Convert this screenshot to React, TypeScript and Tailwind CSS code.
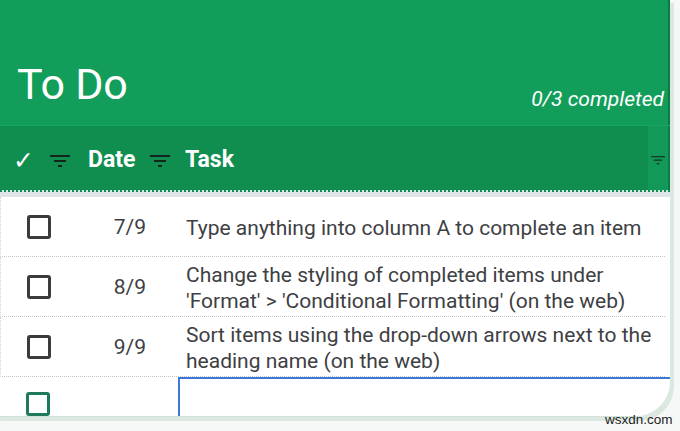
import React from "react";

type Item = { date: string; lines: string[] };

const items: Item[] = [
  { date: "7/9", lines: ["Type anything into column A to complete an item"] },
  {
    date: "8/9",
    lines: [
      "Change the styling of completed items under",
      "'Format' > 'Conditional Formatting' (on the web)",
    ],
  },
  {
    date: "9/9",
    lines: [
      "Sort items using the drop-down arrows next to the",
      "heading name (on the web)",
    ],
  },
];

function FilterIcon({ className = "" }: { className?: string }) {
  return (
    <svg width="20" height="13" viewBox="0 0 20 13" className={className}>
      <rect x="0" y="0" width="20" height="2" fill="#14261c" />
      <rect x="4" y="5" width="12" height="2" fill="#14261c" />
      <rect x="8" y="10" width="4" height="2" fill="#14261c" />
    </svg>
  );
}

function Checkbox({ color = "#3b3b3b" }: { color?: string }) {
  return (
    <div
      className="w-[24px] h-[24px] rounded-[3px] border-[3px] bg-white"
      style={{ borderColor: color }}
    />
  );
}

export default function App() {
  return (
    <div
      className="relative w-[680px] h-[431px] overflow-hidden bg-[#f5f8f6]"
      style={{ fontFamily: "Roboto, 'Noto Sans', Arial, sans-serif" }}
    >
      <div className="w-[670px] h-[416px] bg-white rounded-br-[34px] shadow-[3px_4px_0_1px_#dbe8e0] overflow-hidden flex flex-col">
        {/* title band */}
        <div className="flex h-[125px] shrink-0">
          <div className="relative flex-1 bg-[#129e5a] flex items-end justify-between pl-[17px] pr-[4px] pb-[19px]">
            <span className="text-white text-[43px] leading-none tracking-[-0.2px]">To Do</span>
            <span className="text-white text-[21px] italic leading-none mb-[-4px]">0/3 completed</span>
          </div>
          <div className="w-[2px] bg-[#0b7b45]" />
        </div>

        {/* column headings */}
        <div className="flex h-[65px] shrink-0 border-t border-[#15a55f]">
          <div className="flex-1 bg-[#0f8e50] flex items-center pt-[5px] text-white font-bold text-[23px]">
            <div className="w-[75px] flex items-center">
              <span className="ml-[13px] w-[24px] text-[25px] font-normal" style={{ fontFamily: "'DejaVu Sans', sans-serif" }}>✓</span>
              <FilterIcon className="ml-[13px] mt-[1px]" />
            </div>
            <div className="w-[103px] flex items-center">
              <span className="ml-[13px]">Date</span>
              <FilterIcon className="ml-[15px] mt-[1px]" />
            </div>
            <span className="ml-[7px]">Task</span>
          </div>
          <div className="w-[20px] bg-[#12995a] flex items-center justify-center pt-[4px]">
            <FilterIcon className="scale-[0.7] opacity-80" />
          </div>
          <div className="w-[2px] bg-[#0b7b45]" />
        </div>

        {/* frozen divider */}
        <div className="h-[7px] shrink-0 bg-[#dfe4e9] border-t-2 border-dotted border-[#0f8e50]" />

        {/* rows */}
        {items.map((it) => (
          <div
            key={it.date}
            className="flex h-[60px] shrink-0 items-center border-b border-dotted border-[#c6c6c6] border-l border-l-[#d4d4d4] mr-[5px] text-[#3e4043] text-[21px]"
          >
            <div className="w-[75px] flex justify-center">
              <Checkbox />
            </div>
            <div className="w-[103px] text-right pr-[33px] pt-[2px]">{it.date}</div>
            <div className="pl-[7px] pt-[2px] leading-[26px] whitespace-nowrap">
              {it.lines.map((l) => (
                <div key={l}>{l}</div>
              ))}
            </div>
          </div>
        ))}

        {/* empty row with selected cell */}
        <div className="flex flex-1">
          <div className="w-[75px] flex justify-center pt-[15px]">
            <Checkbox color="#1f7a5c" />
          </div>
          <div className="w-[103px]" />
          <div className="flex-1 border-t-2 border-l-2 border-[#3b78d8]" />
        </div>
      </div>

      {/* torn lower edge */}
      <div className="h-[5px] w-[640px] bg-[#dce8e2] border-t border-dotted border-[#c9d9d0]" />

      <span
        className="absolute left-[605px] top-[413px] text-[13.5px] text-[#1c1c1c] leading-none"
        style={{ fontFamily: "'Liberation Sans', Arial, sans-serif" }}
      >
        wsxdn.com
      </span>
    </div>
  );
}
